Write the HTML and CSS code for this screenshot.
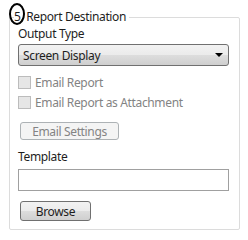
FILE: index.html
```html
<!DOCTYPE html>
<html lang="en">
<head>
    <meta charset="UTF-8">
    <title>Report Destination</title>
    <link rel="stylesheet" href="styles.css">
</head>
<body>
    <!-- Step marker drawn over the group title -->
    <div class="step-mark"></div>

    <fieldset class="group">
        <legend class="group-title">5. Report Destination</legend>

        <div class="label">Output Type</div>
        <div class="combo">
            <span>Screen Display</span>
            <span class="combo-arrow"></span>
        </div>

        <label class="check">
            <span class="check-box"></span>
            Email Report
        </label>
        <label class="check">
            <span class="check-box"></span>
            Email Report as Attachment
        </label>

        <button class="btn btn-disabled btn-email">Email Settings</button>

        <div class="label label-template">Template</div>
        <div class="text-input"></div>

        <button class="btn btn-browse">Browse</button>
    </fieldset>
</body>
</html>
```

FILE: styles.css
```css
/* Global */
body {
    margin: 0;
    width: 248px;
    height: 240px;
    background: #fff;
    font-family: 'Noto Sans', 'Open Sans', sans-serif;
    font-size: 12px;
    letter-spacing: -0.35px;
    color: #1e1e1e;
    position: relative;
    overflow: hidden;
}

/* Group box */
.group {
    margin: 9px 8px 0 9px;
    padding: 0 10px 0 8px;
    height: 221px;
    box-sizing: border-box;
    border: 1px solid #dcdcdc;
    border-radius: 2px;
}

.group-title {
    padding: 0 3px 0 0;
    margin-left: -4px;
    line-height: 16px;
}

.step-mark {
    position: absolute;
    left: 9px;
    top: 3px;
    width: 12px;
    height: 18px;
    border: 2px solid #000;
    border-radius: 50%;
    z-index: 1;
}

.label {
    line-height: 16px;
    margin-top: 1px;
}

/* Combo box */
.combo {
    margin-top: 2px;
    height: 22px;
    box-sizing: border-box;
    border: 1px solid #707070;
    border-radius: 3px;
    background: linear-gradient(#f2f2f2, #ebebeb 50%, #dddddd 51%, #cfcfcf);
    display: flex;
    align-items: center;
    justify-content: space-between;
    padding: 0 5px 0 4px;
}

.combo-arrow {
    width: 0;
    height: 0;
    border-left: 4px solid transparent;
    border-right: 4px solid transparent;
    border-top: 4px solid #000;
}

/* Checkboxes */
.check {
    display: flex;
    align-items: center;
    gap: 4px;
    height: 13px;
    margin-top: 10px;
    color: #838383;
}

.check + .check {
    margin-top: 7px;
}

.check-box {
    width: 13px;
    height: 13px;
    box-sizing: border-box;
    border: 1px solid #bcbcbc;
    background: #e6e6e6;
}

/* Buttons */
.btn {
    display: block;
    font: inherit;
    letter-spacing: inherit;
    padding: 0;
    border: 1px solid #707070;
    border-radius: 3px;
    background: linear-gradient(#f2f2f2, #ebebeb 50%, #dddddd 51%, #cfcfcf);
    color: #1e1e1e;
    margin-left: 2px;
}

.btn-disabled {
    border-color: #adb2b5;
    background: #f4f4f4;
    color: #838383;
}

.btn-email {
    width: 99px;
    height: 18px;
    margin-top: 13px;
}

.btn-browse {
    width: 71px;
    height: 20px;
    margin-top: 10px;
}

.label-template {
    margin-top: 9px;
}

.text-input {
    margin-top: 4px;
    height: 22px;
    box-sizing: border-box;
    border: 1px solid #a0a0a0;
}
```
